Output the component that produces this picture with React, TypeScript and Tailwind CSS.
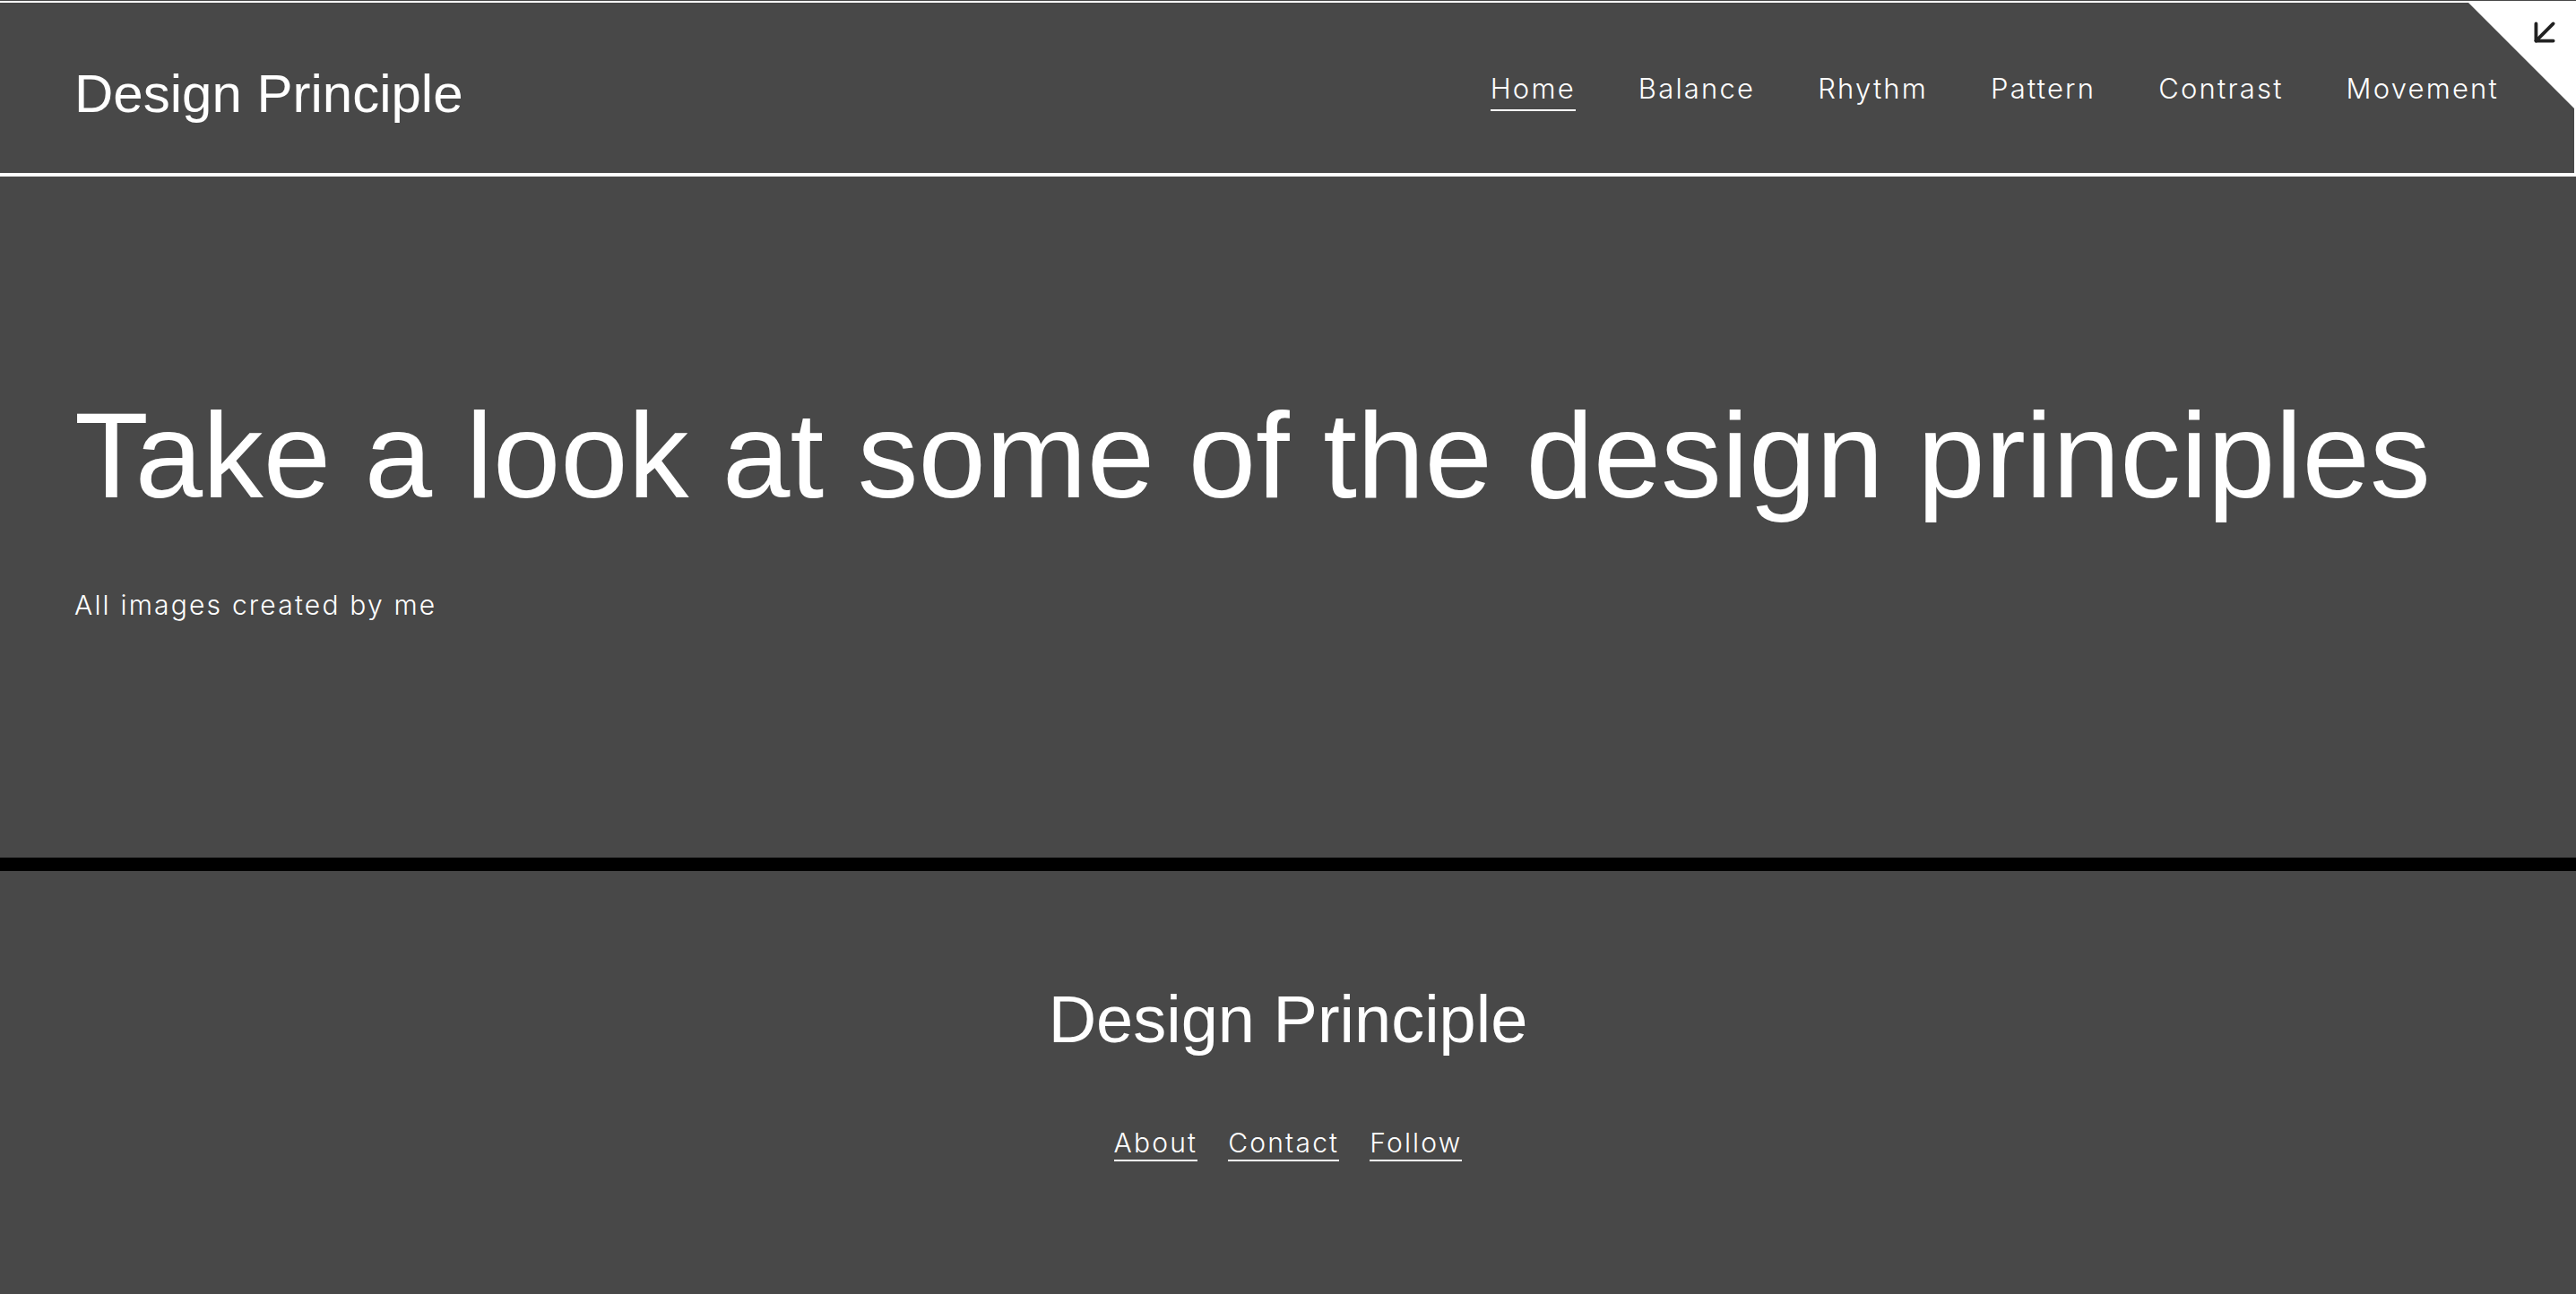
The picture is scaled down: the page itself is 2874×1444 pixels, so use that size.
import { ArrowDownLeft } from 'lucide-react';

const navLinks = ['Home', 'Balance', 'Rhythm', 'Pattern', 'Contrast', 'Movement'];
const footerLinks = ['About', 'Contact', 'Follow'];

export default function App() {
  return (
    <div className="min-h-screen bg-[#484848] pt-px text-white">
      {/* Header */}
      <header className="relative flex h-[196px] items-start justify-between border-t-2 border-r-2 border-b-4 border-white pt-[72px] pl-[83px] pr-[84px]">
        <a className="font-['Liberation_Sans',Arial,sans-serif] text-[60px] leading-none">Design Principle</a>
        <nav className="mt-[8px] flex gap-[70px] font-['Inter',sans-serif] text-[31px] font-light leading-none tracking-[2.2px]">
          {navLinks.map((link, i) => (
            <a
              key={link}
              className={`border-b-2 pb-[8px] ${i === 0 ? 'border-white' : 'border-transparent'}`}
            >
              {link}
            </a>
          ))}
        </nav>
        <div className="absolute -top-[2px] -right-[2px] h-[122px] w-[122px] bg-white [clip-path:polygon(0_0,100%_0,100%_100%)]" />
        <ArrowDownLeft className="absolute top-[10px] right-[10px] h-[46px] w-[46px] text-[#222222]" strokeWidth={2} />
      </header>

      {/* Hero */}
      <section className="h-[760px] pt-[244px] pl-[83px]">
        <h1 className="font-['Liberation_Sans',Arial,sans-serif] text-[135.5px] leading-none">
          Take a look at some of the design principles
        </h1>
        <p className="mt-[83px] font-['Inter',sans-serif] text-[30px] font-light leading-none tracking-[2.2px]">
          All images created by me
        </p>
      </section>

      <div className="h-[15px] bg-black" />

      {/* Footer */}
      <footer className="flex h-[472px] flex-col items-center pt-[129px]">
        <h2 className="font-['Liberation_Sans',Arial,sans-serif] text-[74px] leading-none">Design Principle</h2>
        <div className="mt-[85px] flex gap-[34px] font-['Inter',sans-serif] text-[30px] font-light leading-none tracking-[2.2px]">
          {footerLinks.map((link) => (
            <a key={link} className="border-b-2 border-white pb-[4px]">
              {link}
            </a>
          ))}
        </div>
      </footer>
    </div>
  );
}
